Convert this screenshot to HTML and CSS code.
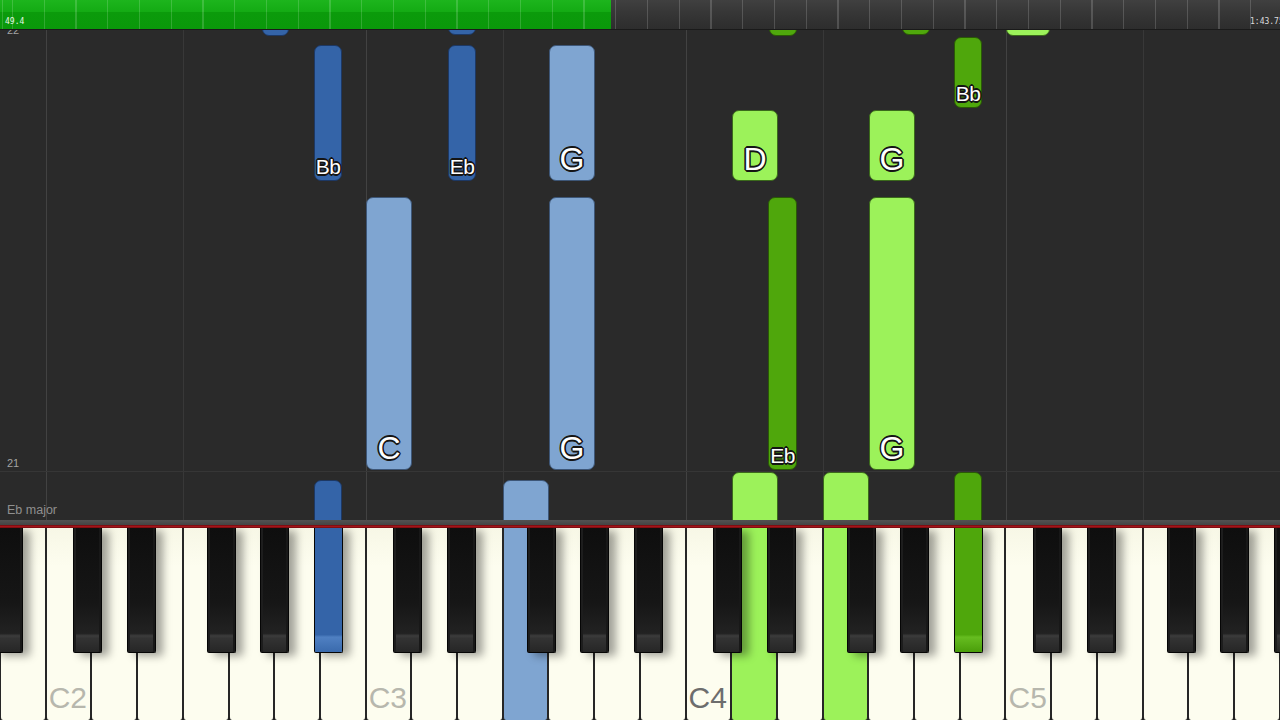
FILE: index.html
```html
<!DOCTYPE html>
<html lang="en">
<head>
    <meta charset="UTF-8">
    <meta name="viewport" content="width=device-width, initial-scale=1.0">
    <title>Piano Roll</title>
    <link rel="stylesheet" href="styles.css">
</head>
<body>
    <div class="app">
        <!-- Timeline -->
        <div class="topbar">
            <div class="progress"></div>
            <div class="ticks"></div>
            <span class="time time-left">49.4</span>
            <span class="time time-right">1:43.75</span>
        </div>

        <!-- Falling notes -->
        <div class="roll" id="roll">
            <span class="measure-num top-num">22</span>
            <span class="measure-num">21</span>
            <span class="key-sig">Eb major</span>
        </div>

        <div class="rail"></div>
        <div class="redline"></div>

        <!-- Keyboard -->
        <div class="keyboard" id="keyboard"></div>
    </div>

    <script>
        const ROLL_TOP = 30;

        // x, top, bottom (page coords), width, colour, label
        const notes = [
            [262, -10, 36, 27, 'blue'],
            [448, -10, 35, 28, 'blue'],
            [769, -10, 36, 28, 'green'],
            [902, -10, 35, 28, 'green'],
            [1006, -10, 36, 44, 'lime'],
            [314, 45, 181, 28, 'blue', 'Bb'],
            [448, 45, 181, 28, 'blue', 'Eb'],
            [549, 45, 181, 46, 'sky', 'G'],
            [954, 37, 108, 28, 'green', 'Bb'],
            [732, 110, 181, 46, 'lime', 'D'],
            [869, 110, 181, 46, 'lime', 'G'],
            [366, 197, 470, 46, 'sky', 'C'],
            [549, 197, 470, 46, 'sky', 'G'],
            [768, 197, 470, 29, 'green', 'Eb'],
            [869, 197, 470, 46, 'lime', 'G'],
            [314, 480, 540, 28, 'blue'],
            [503, 480, 540, 46, 'sky'],
            [732, 472, 540, 46, 'lime'],
            [823, 472, 540, 46, 'lime'],
            [954, 472, 540, 28, 'green']
        ];

        const roll = document.getElementById('roll');
        notes.forEach(([x, top, bottom, w, colour, label]) => {
            const note = document.createElement('div');
            note.className = 'note ' + colour;
            note.style.left = x + 'px';
            note.style.top = (top - ROLL_TOP) + 'px';
            note.style.width = w + 'px';
            note.style.height = (bottom - top) + 'px';
            if (label) {
                const span = document.createElement('span');
                span.className = 'label ' + (label.length > 1 ? 'small' : 'big');
                span.textContent = label;
                note.appendChild(span);
            }
            roll.appendChild(note);
        });

        // White keys: B1, then C2 up to A5
        const names = ['C', 'D', 'E', 'F', 'G', 'A', 'B'];
        const whites = ['B1'];
        for (let o = 2; o <= 5; o++) names.forEach(n => whites.push(n + o));
        whites.length = 28;

        const litWhite = { F3: 'sky', D4: 'lime', F4: 'lime' };
        const litBlack = { 'A#2': 'blue', 'A#4': 'green' };

        const keyboard = document.getElementById('keyboard');
        whites.forEach(name => {
            const key = document.createElement('div');
            key.className = 'white';
            if (litWhite[name]) key.classList.add(litWhite[name]);
            if (name[0] === 'C') {
                const tag = document.createElement('span');
                tag.className = 'keyname' + (name === 'C4' ? ' middle' : '');
                tag.textContent = name;
                key.appendChild(tag);
            }
            keyboard.appendChild(key);
        });

        // Black keys, offset from each C
        const blackOffsets = { 'C#': 27, 'D#': 81, 'F#': 161, 'G#': 214, 'A#': 268 };
        for (let o = 1; o <= 5; o++) {
            const c = 46 + (o - 2) * 320;
            Object.entries(blackOffsets).forEach(([n, off]) => {
                const key = document.createElement('div');
                key.className = 'black';
                if (litBlack[n + o]) key.classList.add(litBlack[n + o]);
                key.style.left = (c + off) + 'px';
                keyboard.appendChild(key);
            });
        }
    </script>
</body>
</html>
```

FILE: styles.css
```css
body {
    margin: 0;
    padding: 0;
    background-color: #2a2a2a;
    font-family: "Liberation Sans", Arial, sans-serif;
    overflow: hidden;
}
.app {
    width: 1280px;
    height: 720px;
    display: flex;
    flex-direction: column;
}

/* Timeline */
.topbar {
    position: relative;
    height: 29px;
    flex: 0 0 auto;
    background: linear-gradient(#404040, #363636 45%, #2d2d2d);
    border-bottom: 1px solid #1a1a1a;
}
.progress {
    width: 611px;
    height: 100%;
    background: linear-gradient(#1db51d, #14ab14 40%, #0b9b0b 42%, #0a980a);
}
.ticks {
    position: absolute;
    inset: 0;
    background-image: repeating-linear-gradient(to right, rgba(255, 255, 255, 0.16) 0 1px, transparent 1px 31.75px);
    background-position: 12px 0;
}
.time {
    position: absolute;
    top: 17px;
    font-family: "DejaVu Sans Mono", monospace;
    font-size: 8px;
    line-height: 10px;
    color: #e6f6e6;
}
.time-left {
    left: 5px;
}
.time-right {
    left: 1250px;
    color: #dddddd;
    white-space: nowrap;
}

/* Note area */
.roll {
    position: relative;
    height: 490px;
    flex: 0 0 auto;
    overflow: hidden;
    background-color: #2a2a2a;
    background-image:
        linear-gradient(to bottom, transparent 441px, #363636 441px 442px, transparent 442px),
        repeating-linear-gradient(to right, #424242 0 1px, transparent 1px 320px),
        repeating-linear-gradient(to right, #383838 0 1px, transparent 1px 320px);
    background-position: 0 0, 46px 0, 183px 0;
}
.measure-num {
    position: absolute;
    left: 7px;
    top: 428px;
    font-size: 11px;
    line-height: 1;
    color: #a3a3a3;
}
.top-num {
    top: -5px;
}
.key-sig {
    position: absolute;
    left: 7px;
    top: 474px;
    font-size: 12.5px;
    line-height: 1;
    color: #8f8f8f;
}
.note {
    position: absolute;
    box-sizing: border-box;
    border: 1px solid;
    border-radius: 7px;
    display: flex;
    flex-direction: column;
    justify-content: flex-end;
    align-items: center;
    z-index: 1;
}
.note.blue {
    background-color: #3464a8;
    border-color: #1d3864;
}
.note.sky {
    background-color: #7fa5d1;
    border-color: #3d5677;
}
.note.lime {
    background-color: #9cf25a;
    border-color: #3b6a1b;
}
.note.green {
    background-color: #4fa70c;
    border-color: #2a5906;
}
.label {
    color: #ffffff;
    line-height: 1;
    text-shadow:
        -1px -1px 0 #151515, 1px -1px 0 #151515, -1px 1px 0 #151515, 1px 1px 0 #151515,
        0 -1.6px 0 #151515, 0 1.6px 0 #151515, -1.6px 0 0 #151515, 1.6px 0 0 #151515;
}
.label.big {
    font-size: 32px;
    padding-bottom: 5px;
}
.label.small {
    font-size: 21px;
    padding-bottom: 3px;
    letter-spacing: -0.6px;
}

/* Rails above the keys */
.rail {
    height: 5px;
    flex: 0 0 auto;
    background: linear-gradient(#525252, #444444);
}
.redline {
    height: 3px;
    flex: 0 0 auto;
    background: linear-gradient(#6e0b0e, #a3141a, #6e0b0e);
}

/* Keyboard */
.keyboard {
    position: relative;
    height: 192px;
    flex: 0 0 auto;
    display: flex;
    overflow: hidden;
    background-color: #1e1e1e;
}
.white {
    flex: 0 0 45.714px;
    box-sizing: border-box;
    border-left: 1px solid #262626;
    border-right: 1px solid #262626;
    border-radius: 0 0 3px 3px;
    background: linear-gradient(#f7f7e6, #fdfdef 20%, #fdfdef);
    display: flex;
    align-items: flex-end;
}
.white.sky {
    background: #7fa5d1;
}
.white.lime {
    background: #9cf25a;
}
.keyname {
    font-size: 30px;
    line-height: 1;
    padding: 0 0 7px 2px;
    color: #b7b7ad;
}
.keyname.middle {
    color: #6d6d6d;
}
.black {
    position: absolute;
    top: 0;
    width: 29px;
    height: 125px;
    box-sizing: border-box;
    border: 1px solid #050505;
    border-top: none;
    border-radius: 0 0 2px 2px;
    background: linear-gradient(#0e0e0e, #161616 60%, #222222 85%, #3c3c3c 87%, #333333 89%, #262626);
    box-shadow: inset 2px 0 0 #1d1d1d, inset -2px 0 0 #181818, 7px 3px 8px rgba(0, 0, 0, 0.36);
    z-index: 2;
}
.black.blue {
    background: linear-gradient(#3464a8, #3464a8 86%, #4f80c2 88%, #3a6aad);
    box-shadow: 7px 3px 8px rgba(0, 0, 0, 0.36);
}
.black.green {
    background: linear-gradient(#4fa70c, #4fa70c 86%, #66bd20 88%, #4a9e0a);
    box-shadow: 7px 3px 8px rgba(0, 0, 0, 0.36);
}
```
